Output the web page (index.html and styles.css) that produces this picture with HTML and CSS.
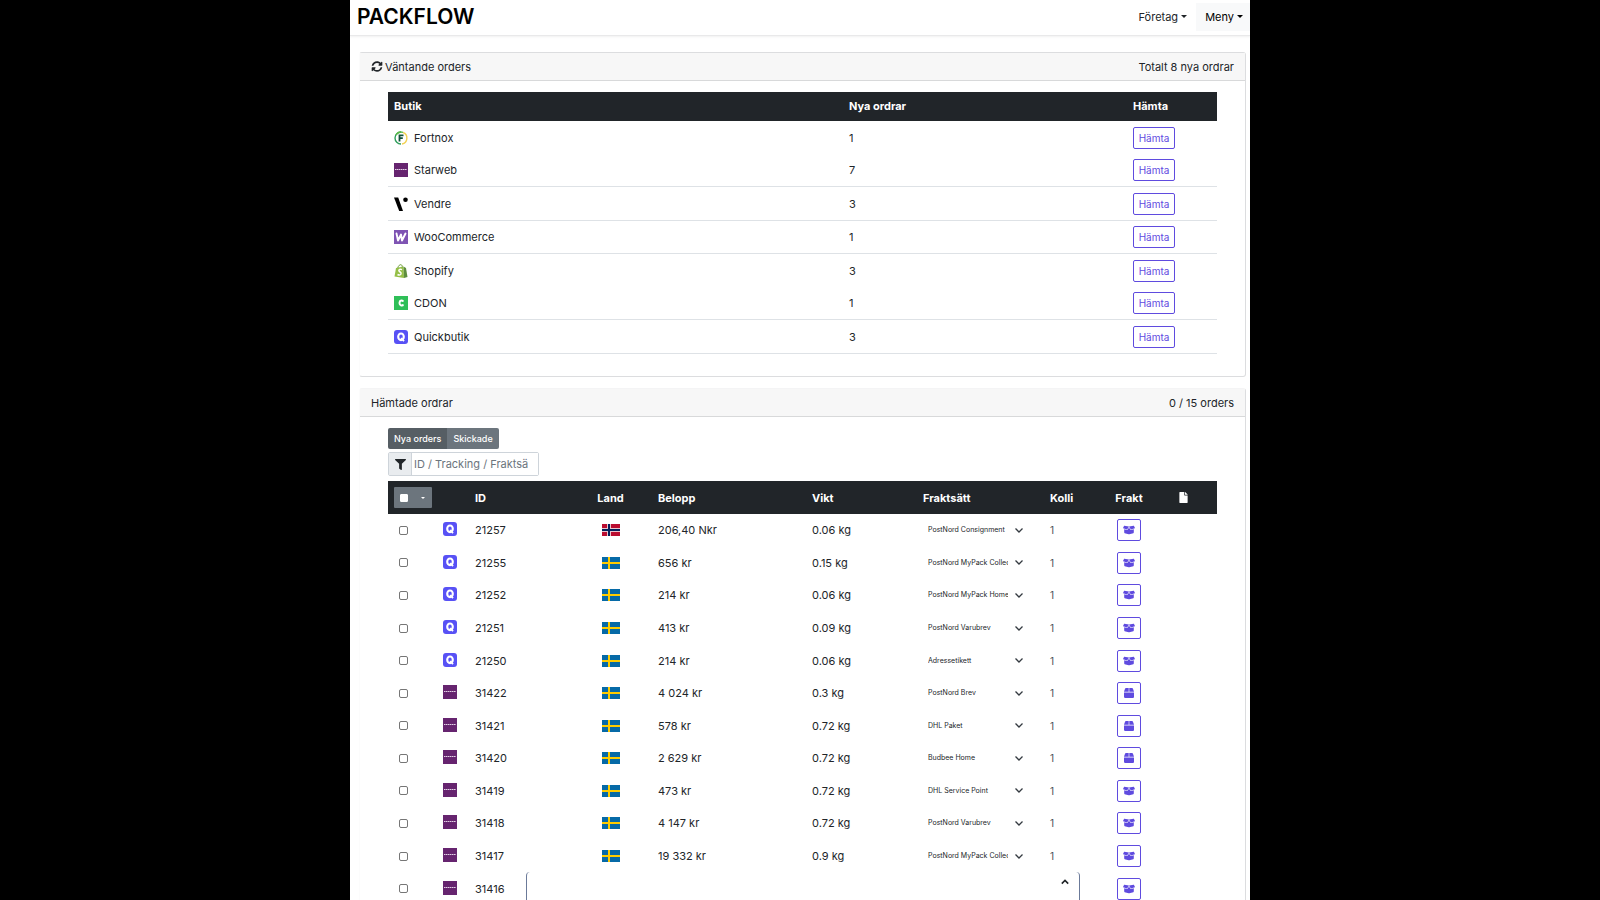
FILE: index.html
```
<!DOCTYPE html>
<html lang="sv">
<head>
<meta charset="utf-8">
<title>Packflow</title>
<link rel="stylesheet" href="styles.css">
</head>
<body>
<svg class="sprite" aria-hidden="true">
  <symbol id="sync" viewBox="0 0 512 512"><path d="M370.72 133.28C339.458 104.008 298.888 87.962 255.848 88c-77.458.068-144.328 53.178-162.791 126.85-1.344 5.363-6.122 9.15-11.651 9.15H24.103c-7.498 0-13.194-6.807-11.807-14.176C33.933 94.924 134.813 8 256 8c66.448 0 126.791 26.136 171.315 68.685L463.03 40.97C478.149 25.851 504 36.559 504 57.941V192c0 13.255-10.745 24-24 24H345.941c-21.382 0-32.09-25.851-16.971-40.971l41.75-41.749zM32 296h134.059c21.382 0 32.09 25.851 16.971 40.971l-41.75 41.75c31.262 29.273 71.835 45.319 114.876 45.28 77.418-.07 144.315-53.144 162.787-126.849 1.344-5.363 6.122-9.15 11.651-9.15h57.304c7.498 0 13.194 6.807 11.807 14.176C478.067 417.076 377.187 504 256 504c-66.448 0-126.791-26.136-171.315-68.685L48.97 471.03C33.851 486.149 8 475.441 8 454.059V320c0-13.255 10.745-24 24-24z"/></symbol>
  <symbol id="filter" viewBox="0 0 512 512"><path d="M487.976 0H24.028C2.71 0-8.047 25.866 7.058 40.971L192 225.941V432c0 7.831 3.821 15.17 10.237 19.662l80 55.98C298.02 518.69 320 507.493 320 487.98V225.941l184.947-184.97C520.021 25.896 509.338 0 487.976 0z"/></symbol>
  <symbol id="file" viewBox="0 0 384 512"><path d="M224 136V0H24C10.7 0 0 10.7 0 24v464c0 13.3 10.7 24 24 24h336c13.3 0 24-10.7 24-24V160H248c-13.2 0-24-10.8-24-24zm160-14.1v6.1H256V0h6.1c6.4 0 12.5 2.5 17 7l97.9 98c4.5 4.5 7 10.6 7 16.9z"/></symbol>
  <symbol id="open" viewBox="0 0 640 512"><path d="M425.7 256c-16.9 0-32.8-9-41.4-23.4L320 126l-64.2 106.6c-8.7 14.5-24.6 23.5-41.5 23.5-4.5 0-9-.6-13.3-1.9L64 215v178c0 14.7 10 27.5 24.2 31l216.2 54.1c10.2 2.5 20.9 2.5 31 0L551.8 424c14.2-3.6 24.2-16.4 24.2-31V215l-137 39.1c-4.3 1.3-8.8 1.9-13.3 1.9zm212.6-112.2L586.8 41c-3.1-6.2-9.8-9.8-16.7-8.9L320 64l91.7 152.1c3.8 6.3 11.4 9.3 18.5 7.3l197.9-56.5c9.9-2.9 14.7-13.9 10.2-23.1zM53.2 41L1.7 143.8c-4.6 9.2.3 20.2 10.1 23l197.9 56.5c7.1 2 14.7-1 18.5-7.3L320 64 69.8 32.1c-6.9-.8-13.5 2.7-16.6 8.9z"/></symbol>
  <symbol id="box" viewBox="0 0 512 512"><path d="M509.5 184.6L458.9 32.8C452.4 13.2 434.1 0 413.4 0H272v192h238.7c-.4-2.5-.4-5-1.2-7.4zM240 0H98.6c-20.7 0-39 13.2-45.5 32.8L2.5 184.6c-.8 2.4-.8 4.9-1.2 7.4H240V0zM0 224v240c0 26.5 21.5 48 48 48h416c26.5 0 48-21.5 48-48V224H0z"/></symbol>
  <symbol id="up" viewBox="0 0 10 6"><path d="M1 5l4-4 4 4" fill="none" stroke="currentColor" stroke-width="2"/></symbol>
  <symbol id="fortnox" viewBox="0 0 14 14"><circle cx="7" cy="7" r="6" fill="#fff"/><path d="M7 1a6 6 0 0 0 0 12" fill="none" stroke="#2f9e5b" stroke-width="1.4"/><path d="M2 4a6 6 0 0 1 7-2.600" fill="none" stroke="#5cb947" stroke-width="1.400"/><path d="M9 1.500a6 6 0 0 1-1 11.500" fill="none" stroke="#f2d254" stroke-width="1.400"/><path d="M5.500 3.600V10.500M5.500 4.400h4M5.500 7.200h3.300" fill="none" stroke="#12503a" stroke-width="1.800"/></symbol>
  <symbol id="starweb" viewBox="0 0 14 14"><path fill="#66246f" d="M0 0h14v14H0z"/><path d="M1 6.500h12" stroke="#e2cfe5" stroke-width="1" stroke-dasharray="1.500 .4"/></symbol>
  <symbol id="vendre" viewBox="0 0 14 14"><path fill="#000" d="M0 .5h4.200L9 14H5.200z"/><circle cx="11.500" cy="2.800" r="2.300" fill="#000"/></symbol>
  <symbol id="woo" viewBox="0 0 14 14"><path fill="#7f54b3" d="M0 0h14v14H0z"/><path d="M2.500 3.500l1.500 7 3-6 1 6 3.500-7" fill="none" stroke="#fff" stroke-width="1.900" stroke-linejoin="round" stroke-linecap="round"/></symbol>
  <symbol id="shopify" viewBox="0 0 14 14"><path fill="#95bf47" d="M2 4l7.500-1.500.5 11.500L.5 12.500z"/><path fill="#5e8e3e" d="M9.500 2.500L12 4l1.500 9L10 14z"/><path d="M3.800 4C4.300 1.500 6 .5 7 .7c1 .2 1.300 1.300 1.300 2.500" fill="none" stroke="#6f9e3c"/><path d="M8 5.600C5.500 4.500 4.300 6 5.200 7.200S7.700 8.600 7 10s-2.200 1.200-3.500.5" fill="none" stroke="#fff" stroke-width="1.500"/></symbol>
  <symbol id="cdon" viewBox="0 0 14 14"><path fill="#2fbf58" d="M0 0h14v14H0z"/><path d="M9.200 5.600C8.700 3.900 5.500 3.900 5.500 7s3.200 3.100 3.700 1.400" fill="none" stroke="#fff" stroke-width="2"/></symbol>
  <symbol id="quick" viewBox="0 0 14 14"><rect width="14" height="14" rx="3" fill="#5851f5"/><ellipse cx="7" cy="6.800" rx="2.800" ry="3.300" fill="none" stroke="#fff" stroke-width="2.100"/><path d="M7.200 8l2.800 3.200" stroke="#fff" stroke-width="1.800"/></symbol>
  <symbol id="se" viewBox="0 0 18 12"><path fill="#066aa7" d="M0 0h18v12H0z"/><path fill="#fecc00" d="M6 0h2v12H6zM0 5h18v2H0z"/></symbol>
  <symbol id="no" viewBox="0 0 18 12"><path fill="#ba0c2f" d="M0 0h18v12H0z"/><path fill="#e9c5ce" d="M5 0h4v12H5zM0 4h18v4H0z"/><path fill="#00205b" d="M6 0h2v12H6zM0 5h18v2H0z"/></symbol>
</svg>

<div class="app">
  <header class="navbar">
    <a class="brand" href="#">PACKFLOW</a>
    <nav class="nav">
      <button class="nav-item caret" type="button">Företag</button>
      <button class="nav-item nav-active caret" type="button">Meny</button>
    </nav>
  </header>

  <main class="main">
    <section class="card">
      <div class="card-head"><span class="card-title"><svg class="sync-icon"><use href="#sync"/></svg>Väntande orders</span><span>Totalt 8 nya ordrar</span></div>
      <div class="card-body">
        <table class="table shops">
          <colgroup><col class="c-shop"><col class="c-new"><col class="c-get"></colgroup>
          <thead><tr><th>Butik</th><th>Nya ordrar</th><th>Hämta</th></tr></thead>
          <tbody>
            <tr><td><div class="shop"><svg class="logo"><use href="#fortnox"/></svg>Fortnox</div></td><td>1</td><td><button class="btn-outline" type="button">Hämta</button></td></tr>
            <tr class="ruled"><td><div class="shop"><svg class="logo"><use href="#starweb"/></svg>Starweb</div></td><td>7</td><td><button class="btn-outline" type="button">Hämta</button></td></tr>
            <tr class="ruled"><td><div class="shop"><svg class="logo"><use href="#vendre"/></svg>Vendre</div></td><td>3</td><td><button class="btn-outline" type="button">Hämta</button></td></tr>
            <tr class="ruled"><td><div class="shop"><svg class="logo"><use href="#woo"/></svg>WooCommerce</div></td><td>1</td><td><button class="btn-outline" type="button">Hämta</button></td></tr>
            <tr><td><div class="shop"><svg class="logo"><use href="#shopify"/></svg>Shopify</div></td><td>3</td><td><button class="btn-outline" type="button">Hämta</button></td></tr>
            <tr class="ruled"><td><div class="shop"><svg class="logo"><use href="#cdon"/></svg>CDON</div></td><td>1</td><td><button class="btn-outline" type="button">Hämta</button></td></tr>
            <tr class="ruled"><td><div class="shop"><svg class="logo"><use href="#quick"/></svg>Quickbutik</div></td><td>3</td><td><button class="btn-outline" type="button">Hämta</button></td></tr>
          </tbody>
        </table>
      </div>
    </section>

    <section class="card">
      <div class="card-head"><span>Hämtade ordrar</span><span>0 / 15 orders</span></div>
      <div class="card-body">
        <div class="tabs"><button class="tab tab-active" type="button">Nya orders</button><button class="tab" type="button">Skickade</button></div>
        <div class="search">
          <label class="search-icon" for="q"><svg class="filter-icon"><use href="#filter"/></svg></label>
          <input class="search-input" id="q" type="text" placeholder="ID / Tracking / Fraktsätt" aria-label="Filtrera ordrar">
        </div>
        <table class="table orders">
          <colgroup><col class="c-check"><col class="c-logo"><col class="c-id"><col class="c-land"><col class="c-sum"><col class="c-weight"><col class="c-method"><col class="c-parcels"><col class="c-ship"><col class="c-file"></colgroup>
          <thead><tr>
            <th><div class="check-all"><input class="check check-head" type="checkbox" aria-label="Markera alla"><button class="check-menu caret" type="button" aria-label="Val"></button></div></th>
            <th></th><th>ID</th><th class="center">Land</th><th>Belopp</th><th>Vikt</th><th>Fraktsätt</th><th>Kolli</th><th class="center">Frakt</th><th class="center"><svg class="file-icon"><use href="#file"/></svg></th>
          </tr></thead>
          <tbody>
            <tr><td><input class="check" type="checkbox" aria-label="21257"></td><td><svg class="logo"><use href="#quick"/></svg></td><td>21257</td><td class="center"><svg class="flag"><use href="#no"/></svg></td><td>206,40 Nkr</td><td>0.06 kg</td><td><select class="method" aria-label="Fraktsätt"><option>PostNord Consignment</option></select></td><td class="parcels">1</td><td class="center"><button class="btn-outline btn-icon" type="button" aria-label="Frakt"><svg class="box-icon"><use href="#open"/></svg></button></td><td></td></tr>
            <tr><td><input class="check" type="checkbox" aria-label="21255"></td><td><svg class="logo"><use href="#quick"/></svg></td><td>21255</td><td class="center"><svg class="flag"><use href="#se"/></svg></td><td>656 kr</td><td>0.15 kg</td><td><select class="method" aria-label="Fraktsätt"><option>PostNord MyPack Collect</option></select></td><td class="parcels">1</td><td class="center"><button class="btn-outline btn-icon" type="button" aria-label="Frakt"><svg class="box-icon"><use href="#open"/></svg></button></td><td></td></tr>
            <tr><td><input class="check" type="checkbox" aria-label="21252"></td><td><svg class="logo"><use href="#quick"/></svg></td><td>21252</td><td class="center"><svg class="flag"><use href="#se"/></svg></td><td>214 kr</td><td>0.06 kg</td><td><select class="method" aria-label="Fraktsätt"><option>PostNord MyPack Home</option></select></td><td class="parcels">1</td><td class="center"><button class="btn-outline btn-icon" type="button" aria-label="Frakt"><svg class="box-icon"><use href="#open"/></svg></button></td><td></td></tr>
            <tr><td><input class="check" type="checkbox" aria-label="21251"></td><td><svg class="logo"><use href="#quick"/></svg></td><td>21251</td><td class="center"><svg class="flag"><use href="#se"/></svg></td><td>413 kr</td><td>0.09 kg</td><td><select class="method" aria-label="Fraktsätt"><option>PostNord Varubrev</option></select></td><td class="parcels">1</td><td class="center"><button class="btn-outline btn-icon" type="button" aria-label="Frakt"><svg class="box-icon"><use href="#open"/></svg></button></td><td></td></tr>
            <tr><td><input class="check" type="checkbox" aria-label="21250"></td><td><svg class="logo"><use href="#quick"/></svg></td><td>21250</td><td class="center"><svg class="flag"><use href="#se"/></svg></td><td>214 kr</td><td>0.06 kg</td><td><select class="method" aria-label="Fraktsätt"><option>Adressetikett</option></select></td><td class="parcels">1</td><td class="center"><button class="btn-outline btn-icon" type="button" aria-label="Frakt"><svg class="box-icon"><use href="#open"/></svg></button></td><td></td></tr>
            <tr><td><input class="check" type="checkbox" aria-label="31422"></td><td><svg class="logo"><use href="#starweb"/></svg></td><td>31422</td><td class="center"><svg class="flag"><use href="#se"/></svg></td><td>4 024 kr</td><td>0.3 kg</td><td><select class="method" aria-label="Fraktsätt"><option>PostNord Brev</option></select></td><td class="parcels">1</td><td class="center"><button class="btn-outline btn-icon" type="button" aria-label="Frakt"><svg class="box-icon box-closed"><use href="#box"/></svg></button></td><td></td></tr>
            <tr><td><input class="check" type="checkbox" aria-label="31421"></td><td><svg class="logo"><use href="#starweb"/></svg></td><td>31421</td><td class="center"><svg class="flag"><use href="#se"/></svg></td><td>578 kr</td><td>0.72 kg</td><td><select class="method" aria-label="Fraktsätt"><option>DHL Paket</option></select></td><td class="parcels">1</td><td class="center"><button class="btn-outline btn-icon" type="button" aria-label="Frakt"><svg class="box-icon box-closed"><use href="#box"/></svg></button></td><td></td></tr>
            <tr><td><input class="check" type="checkbox" aria-label="31420"></td><td><svg class="logo"><use href="#starweb"/></svg></td><td>31420</td><td class="center"><svg class="flag"><use href="#se"/></svg></td><td>2 629 kr</td><td>0.72 kg</td><td><select class="method" aria-label="Fraktsätt"><option>Budbee Home</option></select></td><td class="parcels">1</td><td class="center"><button class="btn-outline btn-icon" type="button" aria-label="Frakt"><svg class="box-icon box-closed"><use href="#box"/></svg></button></td><td></td></tr>
            <tr><td><input class="check" type="checkbox" aria-label="31419"></td><td><svg class="logo"><use href="#starweb"/></svg></td><td>31419</td><td class="center"><svg class="flag"><use href="#se"/></svg></td><td>473 kr</td><td>0.72 kg</td><td><select class="method" aria-label="Fraktsätt"><option>DHL Service Point</option></select></td><td class="parcels">1</td><td class="center"><button class="btn-outline btn-icon" type="button" aria-label="Frakt"><svg class="box-icon"><use href="#open"/></svg></button></td><td></td></tr>
            <tr><td><input class="check" type="checkbox" aria-label="31418"></td><td><svg class="logo"><use href="#starweb"/></svg></td><td>31418</td><td class="center"><svg class="flag"><use href="#se"/></svg></td><td>4 147 kr</td><td>0.72 kg</td><td><select class="method" aria-label="Fraktsätt"><option>PostNord Varubrev</option></select></td><td class="parcels">1</td><td class="center"><button class="btn-outline btn-icon" type="button" aria-label="Frakt"><svg class="box-icon"><use href="#open"/></svg></button></td><td></td></tr>
            <tr><td><input class="check" type="checkbox" aria-label="31417"></td><td><svg class="logo"><use href="#starweb"/></svg></td><td>31417</td><td class="center"><svg class="flag"><use href="#se"/></svg></td><td>19 332 kr</td><td>0.9 kg</td><td><select class="method" aria-label="Fraktsätt"><option>PostNord MyPack Collect</option></select></td><td class="parcels">1</td><td class="center"><button class="btn-outline btn-icon" type="button" aria-label="Frakt"><svg class="box-icon"><use href="#open"/></svg></button></td><td></td></tr>
            <tr><td><input class="check" type="checkbox" aria-label="31416"></td><td><svg class="logo"><use href="#starweb"/></svg></td><td>31416</td><td></td><td></td><td></td><td></td><td></td><td class="center"><button class="btn-outline btn-icon" type="button" aria-label="Frakt"><svg class="box-icon"><use href="#open"/></svg></button></td><td></td></tr>
          </tbody>
        </table>
      </div>
    </section>
  </main>

  <aside class="drawer"><button class="drawer-toggle" type="button" aria-label="Visa"><svg class="up-icon"><use href="#up"/></svg></button></aside>
</div>
</body>
</html>
```
FILE: styles.css
```
* { box-sizing: border-box; }
body { margin: 0; background: #000; color: #212529; font: 11px/16px Inter, "Liberation Sans", sans-serif; }
button, input, select { font: inherit; color: inherit; margin: 0; }
svg { display: block; fill: currentColor; }
.sprite { position: absolute; width: 0; height: 0; }

.app { position: relative; width: 56.25%; height: 100vh; margin: 0 auto; overflow: hidden; background: #fff; }

.navbar { display: flex; justify-content: space-between; align-items: center; height: 36px; padding: 0 0 2px 7px; border-bottom: 1px solid #e9e9ea; box-shadow: 0 1px 2px rgba(0, 0, 0, .06); }
.brand { color: #000; font-size: 21px; font-weight: 600; line-height: 24px; text-decoration: none; }
.nav { display: flex; }
.nav-item { display: flex; align-items: center; height: 28px; padding: 0 9px; border: 0; background: none; }
.nav-active { background: #f8f9fa; color: #000; padding-right: 7px; }
.caret::after { content: ""; margin-left: 3px; border: 3px solid transparent; border-top-color: currentColor; border-bottom: 0; }

.main { display: flex; flex-direction: column; gap: 11px; padding: 16px 4px 0 9px; }
.card { border: 1px solid #dcdddf; border-left-color: #fcfcfc; border-radius: 3px; }
.card + .card { border-top-color: #f4f4f5; }
.card-head { display: flex; justify-content: space-between; align-items: center; height: 28px; padding: 0 11px; background: #f7f7f7; border-bottom: 1px solid #d8d9da; }
.card-title { display: flex; align-items: center; gap: 2px; }
.sync-icon { width: 12px; height: 11px; }
.card-body { padding: 11px 28px 22px 28px; }

.table { width: 100%; table-layout: fixed; border-collapse: separate; border-spacing: 0; }
.table th { height: 29px; padding: 0 6px; background: #212529; color: #fff; font-weight: 700; text-align: left; }
.table td { padding: 0 6px; vertical-align: middle; }
.table .center { text-align: center; }
.table .center svg { margin: 0 auto; }
.shops { height: 262px; }
.shops td { padding-top: 1px; }
.shops th { padding-bottom: 2px; }
.ruled td { border-bottom: 1px solid #dee2e6; }
.c-shop { width: 455px; }
.c-new { width: 284px; }
.c-get { width: 90px; }
.shop { display: flex; align-items: center; gap: 6px; }
.logo { width: 14px; height: 14px; }

.btn-outline { display: inline-flex; align-items: center; justify-content: center; width: 42px; height: 22px; padding: 0; border: 1px solid #5f4bdf; border-radius: 2px; background: #fff; color: #5f4bdf; font-size: 10px; vertical-align: middle; }
.btn-icon { width: 24px; }
.box-icon { width: 12px; height: 10px; }
.box-closed { width: 10px; }

.tabs { display: flex; width: max-content; margin-bottom: 3px; border-radius: 2px; overflow: hidden; }
.tab { height: 21px; padding: 0 6px; border: 0; background: #6c757d; color: #fff; font-size: 9px; font-weight: 500; }
.tab-active { background: #565e64; }
.search { display: flex; width: 151px; height: 24px; margin-bottom: 5px; border: 1px solid #ced4da; border-radius: 2px; }
.search-icon { display: flex; align-items: center; justify-content: center; width: 23px; background: #e9ecef; border-right: 1px solid #ced4da; }
.filter-icon { width: 11px; height: 11px; }
.search-input { flex: 1; min-width: 0; padding: 0 10px 0 2px; border: 0; outline: 0; background: #fff; }
.search-input::placeholder { color: #6c757d; opacity: 1; }

.orders { height: 424px; }
.orders th { height: 33px; }
.orders .logo { margin-bottom: 2px; }
.c-check { width: 49px; }
.c-logo { width: 32px; }
.c-id { width: 100px; }
.c-land { width: 83px; }
.c-sum { width: 154px; }
.c-weight { width: 111px; }
.c-method { width: 127px; }
.c-parcels { width: 65px; }
.c-ship { width: 40px; }
.c-file { width: 68px; }
.check { display: block; appearance: none; width: 9px; height: 9px; margin-left: 5px; border: 1px solid #767676; border-radius: 2px; background: #fff; }
.check-all { display: flex; align-items: center; width: 38px; height: 21px; background: #6c757d; border-radius: 1px; }
.check-head { width: 8px; height: 8px; margin-left: 6px; border-color: #fff; border-radius: 1px; }
.check-menu { display: flex; align-items: center; justify-content: flex-end; flex: 1; height: 21px; padding: 0 7px; border: 0; background: none; }
.check-menu::after { margin: 0; border-width: 2px 2px 0; }
.flag { width: 18px; height: 12px; }
.file-icon { width: 9px; height: 11px; }
.method { display: block; width: 106px; height: 20px; padding: 0 21px 0 5px; border: 0; appearance: none; font-size: 7px; background: url("data:image/svg+xml,%3Csvg xmlns='http://www.w3.org/2000/svg' viewBox='0 0 8 5'%3E%3Cpath d='M.5.5L4 4 7.500.5' fill='none' stroke='%23343a40' stroke-width='1.300'/%3E%3C/svg%3E") no-repeat right 6px center / 8px 5px; }
.table .parcels { font-size: 10px; color: #495057; }

.drawer { position: absolute; bottom: 0; left: 176px; right: 170px; height: 28px; border: 1px solid #6b7a99; border-width: 0 1px; border-radius: 4px 4px 0 0; background: #fff; display: flex; justify-content: flex-end; align-items: flex-start; }
.drawer-toggle { padding: 7px 10px; border: 0; background: none; }
.up-icon { width: 8px; height: 6px; }
```
